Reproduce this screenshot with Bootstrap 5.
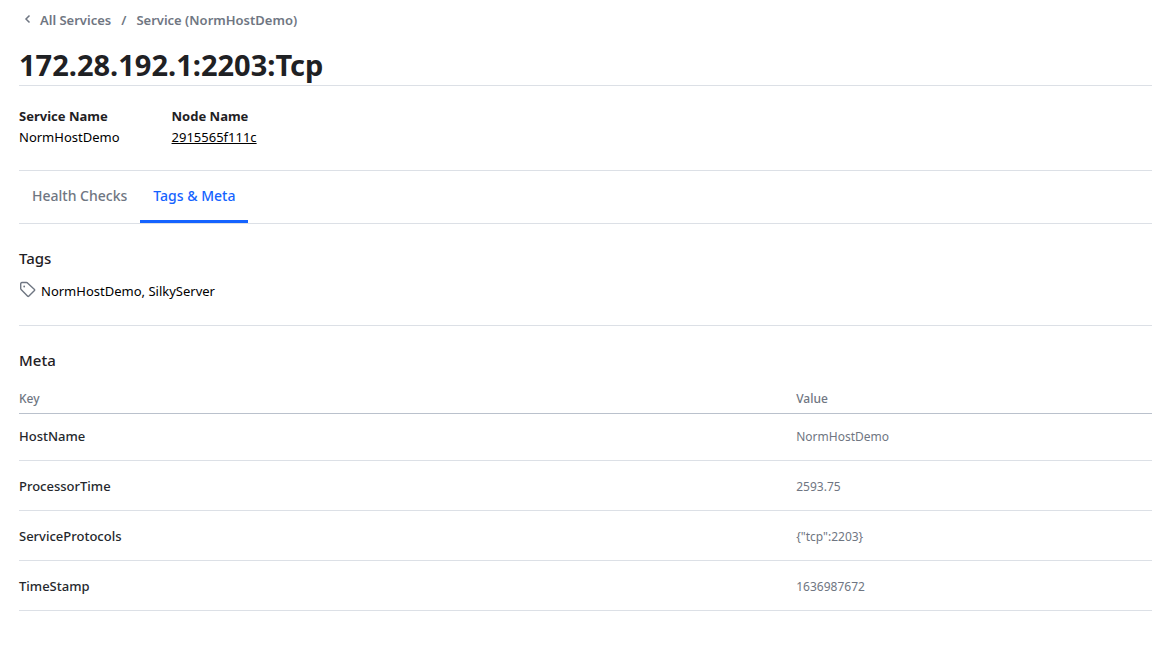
<!DOCTYPE html>
<html lang="en">
<head>
<meta charset="utf-8">
<meta name="viewport" content="width=device-width, initial-scale=1">
<title>172.28.192.1:2203:Tcp</title>
<link rel="stylesheet" href="https://cdn.jsdelivr.net/npm/bootstrap@5.3.0/dist/css/bootstrap.min.css">
<style>
body{font-family:"Noto Sans","Open Sans",sans-serif;font-size:13px;line-height:20px;color:#000}
main{padding-left:19px}
.crumbs{padding:10px 0 0 1px;font-weight:600;color:#6f7682}
.crumbs a{color:inherit}
.crumbs .chev{width:8px;height:10px;margin:0 8px 2px 4px}
.crumbs .sep{margin:0 10px}
.page-title{font-size:29px;line-height:36px;font-weight:700;color:#1f2124;padding:17px 0 2px;margin:0;border-bottom:1px solid #dce0e6}
.facts{gap:52px;padding:20px 0 23px;border-bottom:1px solid #dce0e6}
.facts dt{font-weight:700;color:#1f2124;line-height:21px}
.facts dd{margin:0}
.facts a{color:inherit}
.tabs{border-bottom:1px solid #dce0e6}
.tabs .nav-link{font-size:14px;line-height:20px;color:#6f7682;font-weight:500;padding:15px 13px 14px;border-bottom:3px solid transparent;border-radius:0}
.tabs .nav-link.active{color:#1563ff;border-bottom-color:#1563ff}
.sub-title{font-size:15px;line-height:20px;font-weight:500;color:#1f2124;margin:0}
.tag-block{padding:24px 0;border-bottom:1px solid #dce0e6}
.tag-list{margin-top:13px;gap:5px}
.meta-table{table-layout:fixed;margin:0;--bs-table-bg:transparent}
.meta-table th,.meta-table td{padding:15px 0 14px;border-bottom:1px solid #dce0e6;color:#6f7682;vertical-align:baseline}
.meta-table td{font-size:12px;padding-bottom:13px}
.meta-table tbody th{color:#25282d;font-weight:500}
.meta-table tbody tr:first-child>*{padding-top:12px}
.meta-table thead th{font-size:12px;font-weight:500;padding:11px 0 4px;border-color:#bac1cc}
.key-col{width:68.6%}
</style>
</head>
<body>
<main>
<nav class="crumbs d-flex align-items-center" aria-label="Breadcrumb">
<svg class="chev" viewBox="0 0 8 10" fill="none" stroke="currentColor" stroke-width="1.5" aria-hidden="true"><path d="M5.500 1.500 2 5l3.500 3.500"/></svg>
<a class="text-decoration-none" href="#">All Services</a><span class="sep">/</span><a class="text-decoration-none" href="#">Service (NormHostDemo)</a>
</nav>
<h1 class="page-title">172.28.192.1:2203:Tcp</h1>
<dl class="facts d-flex mb-0">
<div><dt>Service Name</dt><dd>NormHostDemo</dd></div>
<div><dt>Node Name</dt><dd><a href="#">2915565f111c</a></dd></div>
</dl>
<nav class="tabs nav" aria-label="Sections">
<a class="nav-link" href="#">Health Checks</a>
<a class="nav-link active" href="#" aria-current="page">Tags &amp; Meta</a>
</nav>
<section class="tag-block">
<h2 class="sub-title">Tags</h2>
<div class="tag-list d-flex align-items-start">
<svg width="17" height="17" viewBox="0 0 17 17" fill="none" stroke="#6f7682" stroke-width="1.4" stroke-linejoin="round" aria-hidden="true"><path d="M3 1.500h4.500q.5 0 1 .4l7 6.600q.5.500 0 1l-5.800 5.800q-.5.500-1 0l-6.600-6.900q-.5-.5-.4-1V3q0-1.500 1.300-1.500z"/><circle cx="5.200" cy="5.500" r=".9" fill="#6f7682" stroke="none"/></svg>
<span>NormHostDemo, SilkyServer</span>
</div>
</section>
<section class="pt-4">
<h2 class="sub-title">Meta</h2>
<table class="meta-table table mt-2">
<thead><tr><th class="key-col" scope="col">Key</th><th scope="col">Value</th></tr></thead>
<tbody>
<tr><th scope="row">HostName</th><td>NormHostDemo</td></tr>
<tr><th scope="row">ProcessorTime</th><td>2593.75</td></tr>
<tr><th scope="row">ServiceProtocols</th><td>{"tcp":2203}</td></tr>
<tr><th scope="row">TimeStamp</th><td>1636987672</td></tr>
</tbody>
</table>
</section>
</main>
<script src="https://cdn.jsdelivr.net/npm/bootstrap@5.3.0/dist/js/bootstrap.bundle.min.js"></script>
</body>
</html>
